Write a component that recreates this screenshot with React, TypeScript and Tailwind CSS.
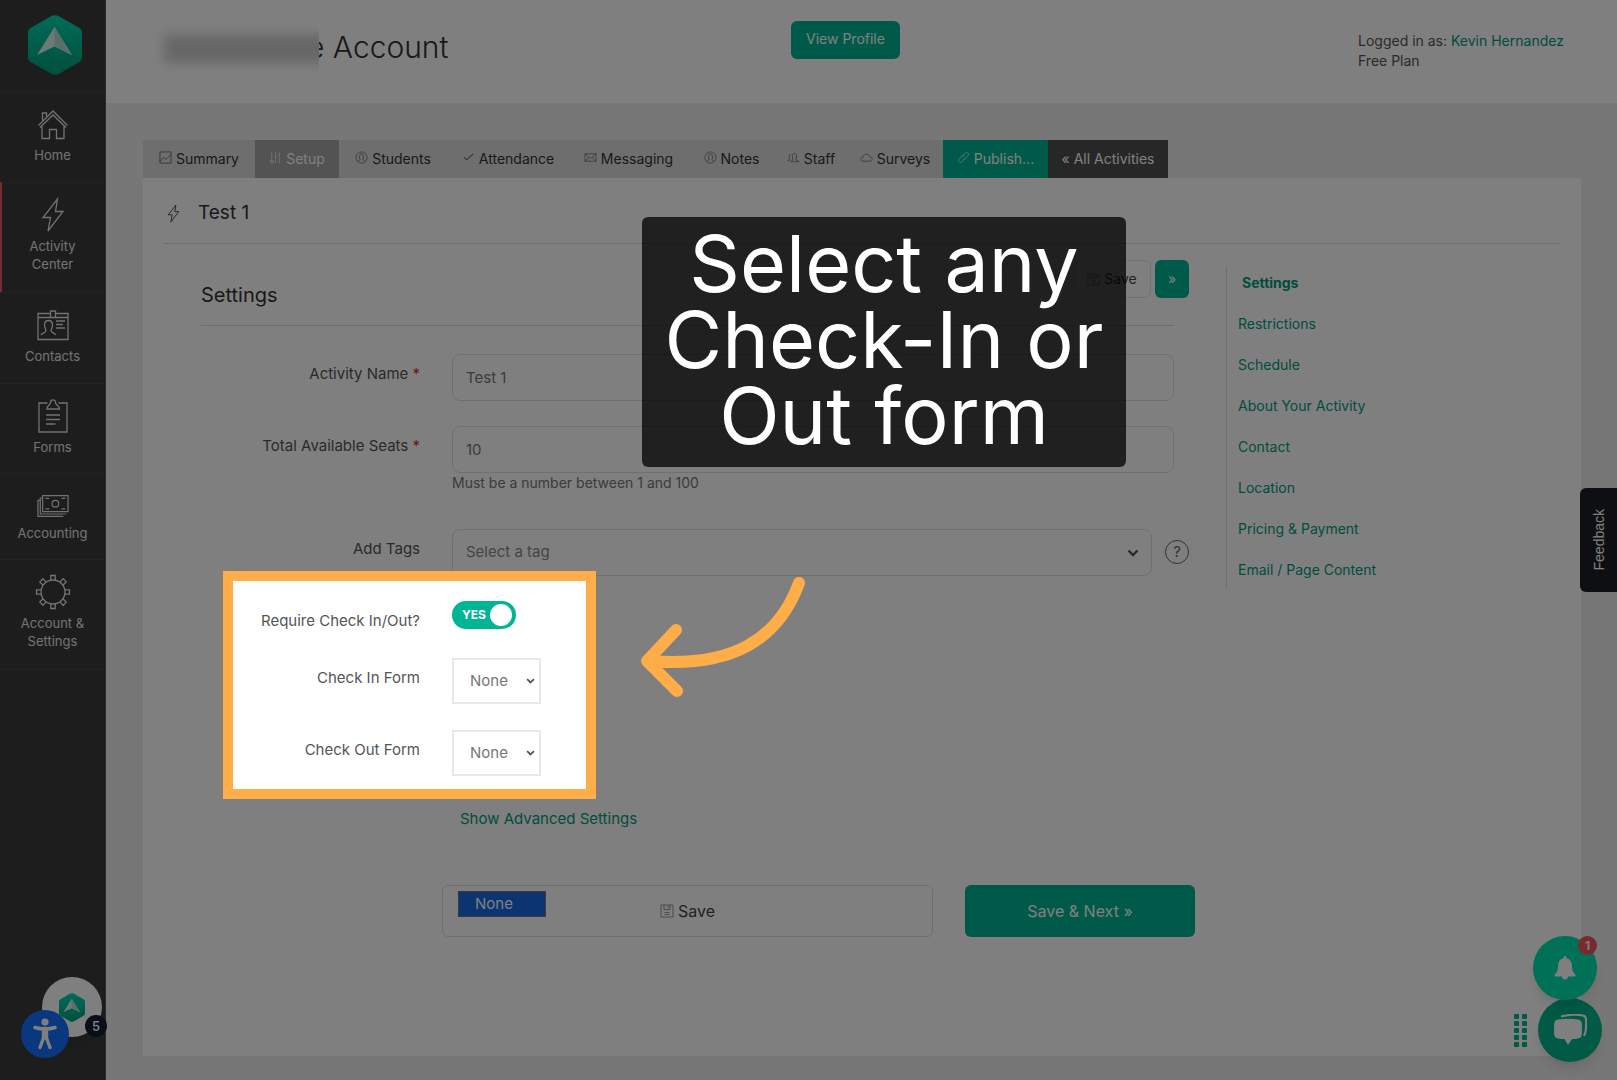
import { useId, useState } from 'react';
import type { ReactNode } from 'react';

type IconProps = { className?: string };

function Stroke({ className, box = 32, width = 1.3, children }: IconProps & { box?: number; width?: number; children: ReactNode }) {
  return (
    <svg
      className={className}
      viewBox={`0 0 ${box} ${box}`}
      fill="none"
      stroke="currentColor"
      strokeWidth={width}
      aria-hidden="true"
    >
      {children}
    </svg>
  );
}

const HomeIcon = ({ className }: IconProps) => (
  <Stroke className={className}>
    <path d="M1.500 17.500 16 3l14.500 14.500M5 17v13.500h7.500v-9h7v9H27V17M3 19.500 16 7l13 12.500M5.500 12.500V5h4v3.500" />
  </Stroke>
);

const BoltIcon = ({ className, width = 1.3 }: IconProps & { width?: number }) => (
  <Stroke className={className} box={36} width={width}>
    <path d="M22.500 2 8 20.500h7.500L13 34l15-19.500h-7.500L22.500 2Z" />
  </Stroke>
);

const ContactsIcon = ({ className }: IconProps) => (
  <Stroke className={className}>
    <path d="M13.500 4.500H1v26h30v-26H18.500M1 8.500h12.500M18.500 8.500H31M13.500 2h5v6.500h-5zM19 12h9M19 15.500h7M19 19h9" />
    <path d="M4 26c1-2.500 5-2 5-4.500 0-1.500-1.500-2.500-1.500-5.500 0-6 8-6 8 0 0 3-1.500 4-1.500 5.500C14 24 17.500 23.500 19 26" />
  </Stroke>
);

const FormsIcon = ({ className }: IconProps) => (
  <Stroke className={className} box={36}>
    <path d="M12.500 5H4v29h28V5h-8.500M12 11h12.500c0-4-4-3.500-4-6.500C20.500 1 15.500 1 15.500 4.500c0 3-4 2.500-3.500 6.500ZM11 17h14M11 21.500h14M11 26h9.500" />
  </Stroke>
);

const AccountingIcon = ({ className }: IconProps) => (
  <Stroke className={className} box={34}>
    <path d="M6 6h27v17H6zM6 8.500H3.500v17H31M3.500 11H1v17h27M9 9h4M9 20h4M26 9h4M26 20h4" />
    <circle cx="19.500" cy="14.500" r="3.500" />
  </Stroke>
);

const GearIcon = ({ className }: IconProps) => (
  <Stroke className={className} box={36}>
    <circle cx="18" cy="18" r="12" />
    {[0, 45, 90, 135, 180, 225, 270, 315].map((a) => (
      <path key={a} d="M15.800 6.200V1.500h4.400v4.700" transform={`rotate(${a} 18 18)`} />
    ))}
  </Stroke>
);

const ChartIcon = ({ className }: IconProps) => (
  <Stroke className={className} box={14} width={0.9}>
    <path d="M1 1h12v12H1zM1 11.500l4-4.500 2.500 2L13 3.500" />
  </Stroke>
);

const SlidersIcon = ({ className }: IconProps) => (
  <Stroke className={className} box={14} width={1}>
    <path d="M3 1v9.500M7 5.500V13M7 1v2.500M11 1v1M11 4v9M1.500 10.500h3v2h-3zM5.500 5.500h3M9.500 3.500h3" />
  </Stroke>
);

const PersonIcon = ({ className }: IconProps) => (
  <Stroke className={className} box={14} width={0.8}>
    <circle cx="7" cy="7" r="6" />
    <path d="M3 11c1-1 2.500-.8 2.500-2C4.500 8 4.400 3 7 3s2.500 5 1.500 6c0 1.200 1.500 1 2.500 2" />
  </Stroke>
);

const CheckIcon = ({ className }: IconProps) => (
  <Stroke className={className} box={14} width={1.1}>
    <path d="m2 6.500 3 3 7-6.500" />
  </Stroke>
);

const MailIcon = ({ className }: IconProps) => (
  <Stroke className={className} box={14} width={0.8}>
    <path d="M1 3h12v8H1zM1 3l6 5 6-5M1 11l4.500-4M13 11 8.500 7" />
  </Stroke>
);

const StaffIcon = ({ className }: IconProps) => (
  <Stroke className={className} box={14} width={0.8}>
    <path d="M4 11.500c1-1.500 2.500-1 2.500-2.500C5.500 8 5.200 2.500 8 2.500S10.500 8 9.500 9c0 1.500 2.500 1 3.500 2.500H4ZM1 10.500c1-1 2-.8 2-2C2 7.500 2 3.500 4.500 3.500M1 10.500h2" />
  </Stroke>
);

const CloudIcon = ({ className }: IconProps) => (
  <Stroke className={className} box={14} width={0.8}>
    <path d="M3.500 11C0 11 .3 7 3 7c0-4 6-5 7-1 4 0 4 5 .5 5h-7Z" />
  </Stroke>
);

const LinkIcon = ({ className }: IconProps) => (
  <Stroke className={className} box={14} width={1}>
    <path d="m6 5.500 3-3.500c1.500-1.500 4.500.8 3 2.800L9.500 8C8.500 9 7 8.800 6.300 8M8 8.500 5 12c-1.500 1.500-4.500-.8-3-2.800L4.500 6c1-1 2.500-.8 3.200 0" />
  </Stroke>
);

const DiskIcon = ({ className }: IconProps) => (
  <Stroke className={className} box={14} width={0.8}>
    <path d="M1 1h12v12H1zM4 1v4.500h6V1M8 2v2M4.500 8.500h5M4.500 10.500h5" />
  </Stroke>
);

function Chevron({ className }: IconProps) {
  return (
    <svg className={className} viewBox="0 0 12 8" fill="none" stroke="currentColor" strokeWidth={2.4} aria-hidden="true">
      <path d="m1.500 1.500 4.500 4.500 4.500-4.500" />
    </svg>
  );
}

function Logo({ className }: IconProps) {
  const id = useId();
  return (
    <svg className={className} viewBox="0 0 54 60" aria-hidden="true">
      <defs>
        <linearGradient id={id} x1="0" y1="0" x2="0" y2="1">
          <stop offset="0" stopColor="#00d8b0" />
          <stop offset="1" stopColor="#00a078" />
        </linearGradient>
      </defs>
      <path
        d="M23.500 1Q27-.7 30.500 1L51 12.800Q54 14.500 54 18v24q0 3.500-3 5.200L30.500 59Q27 60.700 23.500 59L3 47.200Q0 45.500 0 42V18q0-3.500 3-5.200Z"
        fill={`url(#${id})`}
      />
      <path d="M26.500 12 44 40 26.500 31.500 9 40Z" fill="#d9f3ea" />
      <path d="M26.500 12 44 40 26.500 31.500Z" fill="#b5dfd0" />
    </svg>
  );
}

const menu = [
  { label: 'Home', icon: HomeIcon, size: 'h-[91px]', iconSize: 'h-8 w-8', gap: 'mt-1' },
  { label: 'Activity Center', icon: BoltIcon, size: 'h-[110px]', iconSize: 'h-9 w-9', gap: 'mt-1' },
  { label: 'Contacts', icon: ContactsIcon, size: 'h-[91px]', iconSize: 'h-8 w-8', gap: 'mt-1' },
  { label: 'Forms', icon: FormsIcon, size: 'h-[90px]', iconSize: 'h-9 w-9', gap: 'mt-1' },
  { label: 'Accounting', icon: AccountingIcon, size: 'h-[86px]', iconSize: 'h-8 w-8', gap: '' },
  { label: 'Account & Settings', icon: GearIcon, size: 'h-[110px]', iconSize: 'h-9 w-9', gap: 'mt-1' },
];

const tabs = [
  { label: 'Summary', icon: ChartIcon, style: 'w-[112px] bg-[#dcdcdc] text-[#333]' },
  { label: 'Setup', icon: SlidersIcon, style: 'w-[84px] bg-[#a6a6a6] text-white' },
  { label: 'Students', icon: PersonIcon, style: 'w-[108px] bg-[#dcdcdc] text-[#333]' },
  { label: 'Attendance', icon: CheckIcon, style: 'w-[122px] bg-[#dcdcdc] text-[#333]' },
  { label: 'Messaging', icon: MailIcon, style: 'w-[119px] bg-[#dcdcdc] text-[#333]' },
  { label: 'Notes', icon: PersonIcon, style: 'w-[87px] bg-[#dcdcdc] text-[#333]' },
  { label: 'Staff', icon: StaffIcon, style: 'w-[72px] bg-[#dcdcdc] text-[#333]' },
  { label: 'Surveys', icon: CloudIcon, style: 'w-[96px] bg-[#dcdcdc] text-[#333]' },
  { label: 'Publish...', icon: LinkIcon, style: 'w-[105px] bg-[#00b593] text-white' },
  { label: '« All Activities', icon: null, style: 'w-[120px] bg-[#4e4e4e] text-white' },
];

const sections = [
  'Restrictions',
  'Schedule',
  'About Your Activity',
  'Contact',
  'Location',
  'Pricing & Payment',
  'Email / Page Content',
];

function Sidebar() {
  return (
    <aside className="w-[106px] shrink-0 border-r border-[#555] bg-[#3b3b3b]">
      <a href="#home" aria-label="Dashboard" className="flex h-[91px] justify-center pl-1 pt-[15px]">
        <Logo className="h-[60px] w-[54px]" />
      </a>
      <nav className="border-b border-[#454545]">
        {menu.map(({ label, icon: Icon, size, iconSize, gap }) => (
          <a
            key={label}
            href="#menu"
            className={`flex flex-col items-center border-t border-t-[#454545] pt-[14px] text-center text-[13px] leading-[18px] text-[#e4e4e4] ${size} ${
              label === 'Activity Center' ? 'border-l-2 border-l-[#f0595c] pr-[2px]' : ''
            }`}
          >
            <span className="flex h-9 shrink-0 items-center">
              <Icon className={iconSize} />
            </span>
            <span className={`w-[76px] ${gap}`}>{label}</span>
          </a>
        ))}
      </nav>
    </aside>
  );
}

function Header() {
  return (
    <header className="grid h-[103px] grid-cols-[1fr_109px_1fr] items-start bg-white pr-8">
      <h1 className="flex pl-[46px] pt-[25px] text-[30px] leading-[44px] font-light text-[#333]">
        {/* Organization name stays hidden */}
        <span className="relative -mr-3 flex h-12 w-[167px] items-center overflow-hidden bg-white" aria-hidden="true">
          <span className="-mr-4 ml-3 h-7 flex-1 bg-[#cdcdcd] blur-[6px]" />
        </span>
        e Account
      </h1>
      <a
        href="#profile"
        className="mt-[21px] h-[38px] rounded-md bg-[#00b593] text-center text-sm leading-[36px] text-white"
      >
        View Profile
      </a>
      <div className="w-[227px] justify-self-end whitespace-nowrap pt-[31px] text-sm leading-5 text-[#555]">
        <p>
          Logged in as:{' '}
          <a href="#account" className="text-[#009a7c]">
            Kevin Hernandez
          </a>
        </p>
        <p>Free Plan</p>
      </div>
    </header>
  );
}

function Tabs() {
  return (
    <nav className="flex text-sm">
      {tabs.map(({ label, icon: Icon, style }) => (
        <a
          key={label}
          href="#tab"
          className={`flex h-[38px] items-center justify-center gap-1 whitespace-nowrap pb-px ${style}`}
        >
          {Icon && <Icon className="mb-[2px] h-[13px] w-[13px] shrink-0 opacity-70" />}
          {label}
        </a>
      ))}
    </nav>
  );
}

type RowProps = { id: string; label: string; required?: boolean; className?: string; children: ReactNode };

function Row({ id, label, required, className = '', children }: RowProps) {
  return (
    <div className={`flex gap-8 ${className}`}>
      <label htmlFor={id} className="w-[219px] shrink-0 text-right text-[15px] leading-10 text-[#555]">
        {label}
        {required && <span className="text-[#e02b2b]"> *</span>}
      </label>
      {children}
    </div>
  );
}

function FormSelect({ id }: { id: string }) {
  return (
    <div className="relative text-[#777]">
      <select id={id} className="h-[46px] w-[89px] appearance-none border-2 border-[#e8e8e8] bg-white pl-4 text-[15px]">
        <option>None</option>
      </select>
      <Chevron className="pointer-events-none absolute right-[6px] top-5 h-[6px] w-[9px] text-[#555]" />
    </div>
  );
}

function Spotlight() {
  return (
    <div className="pointer-events-none absolute -bottom-[23px] -top-[30px] left-[22px] z-40 w-[373px] border-10 border-[#ffad48] shadow-[0_0_0_9999px_rgba(0,0,0,0.5)]" />
  );
}

function SettingsForm() {
  const [required, setRequired] = useState(true);

  return (
    <form className="min-w-0 flex-1" onSubmit={(e) => e.preventDefault()}>
      <div className="flex items-start justify-between pr-[6px] pt-4">
        <h3 className="pt-[21px] text-xl leading-7 text-[#333]">Settings</h3>
        <div className="flex gap-1">
          <button
            type="button"
            className="flex h-[38px] w-[78px] items-center justify-center gap-1 rounded-md border border-[#e4e4e4] text-sm text-[#444]"
          >
            <DiskIcon className="h-[13px] w-[13px] opacity-70" />
            Save
          </button>
          <button type="button" className="h-[38px] w-[34px] rounded-md bg-[#00b593] text-sm text-white">
            »
          </button>
        </div>
      </div>
      <hr className="mr-[21px] mt-4 border-[#ddd]" />

      <Row id="name" label="Activity Name" required className="mr-[21px] mt-7">
        <input
          id="name"
          defaultValue="Test 1"
          className="h-[47px] min-w-0 flex-1 rounded-lg border border-[#e0e0e0] px-[13px] text-[15px] text-[#777]"
        />
      </Row>
      <Row id="seats" label="Total Available Seats" required className="mr-[21px] mt-[25px]">
        <div className="min-w-0 flex-1">
          <input
            id="seats"
            defaultValue="10"
            className="block h-[47px] w-full rounded-lg border border-[#e0e0e0] px-[13px] text-[15px] text-[#777]"
          />
          <p className="text-sm leading-5 text-[#777]">Must be a number between 1 and 100</p>
        </div>
      </Row>
      <Row id="tags" label="Add Tags" className="mr-[6px] mt-9">
        <div className="relative min-w-0 flex-1">
          <select
            id="tags"
            className="h-[47px] w-full appearance-none rounded-lg border border-[#e0e0e0] bg-white px-[13px] text-[15px] text-[#888]"
          >
            <option>Select a tag</option>
          </select>
          <Chevron className="pointer-events-none absolute right-[13px] top-5 h-2 w-3 text-[#555]" />
        </div>
        <button
          type="button"
          aria-label="Help"
          className="-ml-[19px] mt-[11px] h-6 w-6 rounded-full border border-[#666] text-[15px] leading-[22px] text-[#666]"
        >
          ?
        </button>
      </Row>

      <div className="relative mt-[25px]">
        <Row id="check" label="Require Check In/Out?" className="h-[57px]">
          <div className="relative h-7 w-16">
            <input
              id="check"
              type="checkbox"
              role="switch"
              checked={required}
              onChange={() => setRequired(!required)}
              className="peer h-7 w-16 appearance-none rounded-full bg-gray-300 checked:bg-[#00b593]"
            />
            <span className="pointer-events-none absolute left-[10px] top-0 text-xs font-bold leading-7 text-white">
              {required ? 'YES' : ''}
            </span>
            <span className="pointer-events-none absolute left-1 top-[3px] h-[22px] w-[22px] rounded-full bg-white peer-checked:left-[38px]" />
          </div>
        </Row>
        <Row id="in-form" label="Check In Form" className="h-[72px]">
          <FormSelect id="in-form" />
        </Row>
        <Row id="out-form" label="Check Out Form">
          <FormSelect id="out-form" />
        </Row>
        <Spotlight />
      </div>

      <a href="#advanced" className="ml-[259px] mt-[33px] block w-fit text-[15px] leading-5 text-[#009a7c]">
        Show Advanced Settings
      </a>

      <div className="relative ml-[241px] mt-14 flex gap-8 text-base">
        <button
          type="submit"
          className="flex h-[52px] flex-1 items-center justify-center gap-1 rounded-md border border-[#ddd] text-[#444]"
        >
          <DiskIcon className="h-[14px] w-[14px] opacity-70" />
          Save
        </button>
        <button type="button" className="h-[52px] w-[230px] rounded-md bg-[#00b593] text-base text-white">
          Save &amp; Next »
        </button>
        <ul role="listbox" aria-label="Form options" className="absolute left-4 top-[6px] w-[88px] border border-[#777]">
          <li role="option" aria-selected="true" className="bg-[#1668e0] pl-4 text-[15px] leading-6 text-white">
            None
          </li>
        </ul>
      </div>
    </form>
  );
}

function SectionNav() {
  return (
    <nav className="ml-[31px] mt-[22px] flex w-[334px] shrink-0 flex-col self-start border-l border-[#ddd] pb-2 pl-[11px] pt-[7px] text-sm leading-5 text-[#009a7c]">
      <a href="#settings" className="mb-[21px] pl-1 font-bold">
        Settings
      </a>
      <div className="flex flex-col gap-[21px]">
        {sections.map((section) => (
          <a key={section} href="#section">
            {section}
          </a>
        ))}
      </div>
    </nav>
  );
}

function TourCallout() {
  return (
    <>
      <div className="absolute left-[499px] top-[39px] z-50 w-[484px] rounded-md bg-black/75 pb-[14px] pt-2 text-center text-[79px] leading-[76px] text-white">
        Select any
        <br />
        Check-In or
        <br />
        Out form
      </div>
      <svg
        className="absolute left-[497px] top-[398px] z-50 h-[124px] w-[170px]"
        viewBox="0 0 170 124"
        fill="none"
        stroke="#ffad48"
        strokeWidth={12}
        strokeLinecap="round"
        strokeLinejoin="round"
        aria-hidden="true"
      >
        <path d="M159 7C138 64 92 92 9 85M36 54 7 85l30 30" />
      </svg>
    </>
  );
}

function Widgets() {
  return (
    <>
      <button
        type="button"
        className="fixed right-0 top-[488px] z-30 h-[104px] w-[37px] rounded-l-md bg-[#1b1f24] pt-1 font-['Liberation_Sans',sans-serif] text-sm text-white"
      >
        <span className="inline-block rotate-180 [writing-mode:vertical-rl]">Feedback</span>
      </button>

      <div className="fixed bottom-[43px] left-[42px] z-30 flex h-[60px] w-[60px] items-center justify-center rounded-full bg-white shadow-lg">
        <Logo className="h-[29px] w-[26px]" />
      </div>
      <span className="fixed bottom-[43px] left-[85px] z-30 h-[22px] w-[22px] rounded-full bg-[#141c30] text-center text-[13px] font-semibold leading-[22px] text-white">
        5
      </span>
      <button
        type="button"
        aria-label="Accessibility"
        className="fixed bottom-[22px] left-[21px] z-30 flex h-12 w-12 items-center justify-center rounded-full bg-[#1570ff]"
      >
        <svg className="h-8 w-6" viewBox="0 0 24 32" fill="none" stroke="#fff" strokeWidth={3.4} strokeLinecap="round" aria-hidden="true">
          <circle cx="12" cy="4" r="3.600" fill="#fff" stroke="none" />
          <path d="M2 9.500q10 3 20 0M10.500 11v9L7 29.500M13.500 11v9L17 29.500" />
          <path d="M12 11v8" strokeWidth="5" />
        </svg>
      </button>

      <div className="fixed bottom-[33px] right-[90px] z-30 grid grid-cols-2 gap-x-[3px] gap-y-[2px]">
        {Array.from({ length: 10 }, (_, i) => (
          <span key={i} className="h-[5px] w-[5px] rounded-[1px] bg-[#00b593]" />
        ))}
      </div>
      <button
        type="button"
        aria-label="Chat"
        className="fixed bottom-[18px] right-[15px] z-30 flex h-16 w-16 items-center justify-center rounded-full bg-[#00b48a] shadow-lg"
      >
        <svg className="h-8 w-[34px]" viewBox="0 0 34 32" aria-hidden="true">
          <path d="M8 2.500Q20-.5 30 1.500q3 .5 3 4Q33.500 14 32 20q-.5 1-1.500 1.500" fill="none" stroke="#fff" strokeWidth="2" />
          <path d="M5 5.500q10-1.500 20 0 3.500.5 3.800 4 .5 6 0 11-.3 3.500-3.800 4-3 .5-6 .6L15 31l-3.500-5.900q-3.500 0-6.500-.6-3.500-.5-3.800-4-.5-5 0-11 .3-3.500 3.800-4Z" fill="#fff" />
        </svg>
      </button>
      <button
        type="button"
        aria-label="Notifications"
        className="fixed bottom-20 right-5 z-30 flex h-16 w-16 items-center justify-center rounded-full bg-[#00e0ac] shadow-lg"
      >
        <svg className="h-6 w-[22px]" viewBox="0 0 22 24" fill="#fff" aria-hidden="true">
          <path d="M11 0q1.500 0 1.500 2.200c4 1 5.500 4 5.500 8.300 0 4 1 6 3.500 8.300q.5 1.700-1 1.700H14a3 3 0 0 1-6 0H1.500q-1.500 0-1-1.700C3 16.500 4 14.500 4 10.500c0-4.300 1.500-7.300 5.500-8.300Q9.500 0 11 0Z" />
        </svg>
        <span className="absolute right-0 top-0 h-[19px] w-[19px] rounded-full bg-[#f0555a] text-xs font-bold leading-[19px] text-white">
          1
        </span>
      </button>
    </>
  );
}

export default function App() {
  return (
    <div className="flex min-h-screen overflow-hidden bg-[#efefef] font-['Inter','Open_Sans',sans-serif]">
      <Sidebar />
      <div className="flex min-w-0 flex-1 flex-col">
        <Header />
        <main className="flex flex-1 flex-col pb-6 pl-[37px] pr-9 pt-[37px]">
          <Tabs />
          <div className="relative flex-1 bg-white px-[21px]">
            <h2 className="flex h-[66px] items-center gap-[15px] border-b border-[#ddd] pt-[5px] text-[19px] text-[#333]">
              <BoltIcon className="h-[19px] w-[19px]" width={1.6} />
              Test 1
            </h2>
            <div className="flex pl-[37px]">
              <SettingsForm />
              <SectionNav />
            </div>
            <TourCallout />
          </div>
        </main>
      </div>
      <Widgets />
    </div>
  );
}
